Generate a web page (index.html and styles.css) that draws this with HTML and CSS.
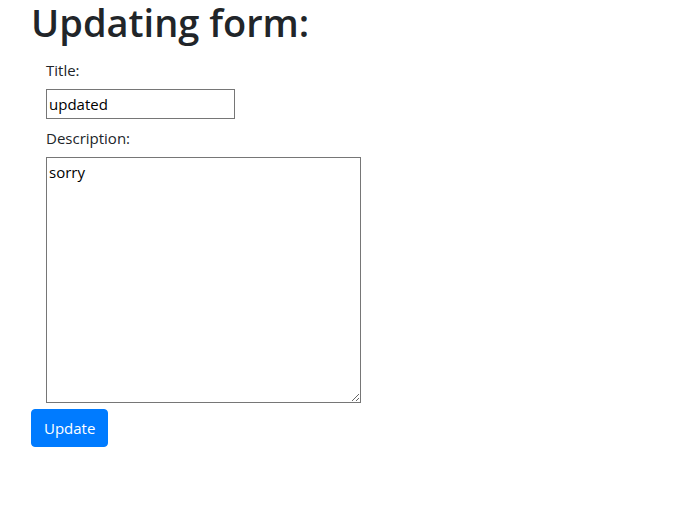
FILE: index.html
```html
<!DOCTYPE html>
<html lang="en">
<head>
<meta charset="utf-8">
<title>Updating form</title>
<link rel="stylesheet" href="styles.css">
</head>
<body>
<div class="page">
  <h1 class="title">Updating form:</h1>
  <form class="form">
    <div class="fields">
      <label class="label" for="title">Title:</label>
      <input class="input" id="title" type="text" value="updated">
      <label class="label label-desc" for="desc">Description:</label>
      <textarea class="textarea" id="desc">sorry</textarea>
    </div>
    <button class="btn" type="button">Update</button>
  </form>
</div>
</body>
</html>
```

FILE: styles.css
```css
html, body {
  margin: 0;
  padding: 0;
  background: #fff;
}
body {
  font-family: "Segoe UI", "Open Sans", "Noto Sans", Arial, sans-serif;
  font-size: 15px;
  line-height: 1.5;
  color: #212529;
}
.page {
  padding-left: 31px;
}
.title {
  margin: 0 0 12px 0;
  font-size: 38px;
  line-height: 44px;
  font-weight: 600;
  color: #212529;
}
.form {
  display: flex;
  flex-direction: column;
  align-items: flex-start;
}
.fields {
  display: flex;
  flex-direction: column;
  align-items: flex-start;
  padding-left: 15px;
}
.label {
  display: block;
  margin-top: 2px;
  margin-bottom: 7px;
  line-height: 24px;
}
.label-desc {
  margin-top: 7px;
  margin-bottom: 7px;
}
.input {
  box-sizing: border-box;
  width: 189px;
  height: 30px;
  margin: 0;
  padding: 1px 2px;
  border: 1px solid #767676;
  font-family: inherit;
  font-size: 15px;
  color: #000;
  background: #fff;
}
.textarea {
  box-sizing: border-box;
  width: 315px;
  height: 246px;
  margin: 0;
  padding: 4px 2px 2px;
  border: 1px solid #767676;
  font-family: inherit;
  font-size: 15px;
  line-height: 21px;
  color: #000;
  background: #fff;
  resize: both;
}
.btn {
  margin-top: 6px;
  box-sizing: border-box;
  height: 38px;
  padding: 6px 12px;
  border: 1px solid #007bff;
  border-radius: 4px;
  background: #007bff;
  color: #fff;
  font-family: inherit;
  font-size: 15px;
  line-height: 24px;
  font-weight: 400;
  cursor: pointer;
}
```
